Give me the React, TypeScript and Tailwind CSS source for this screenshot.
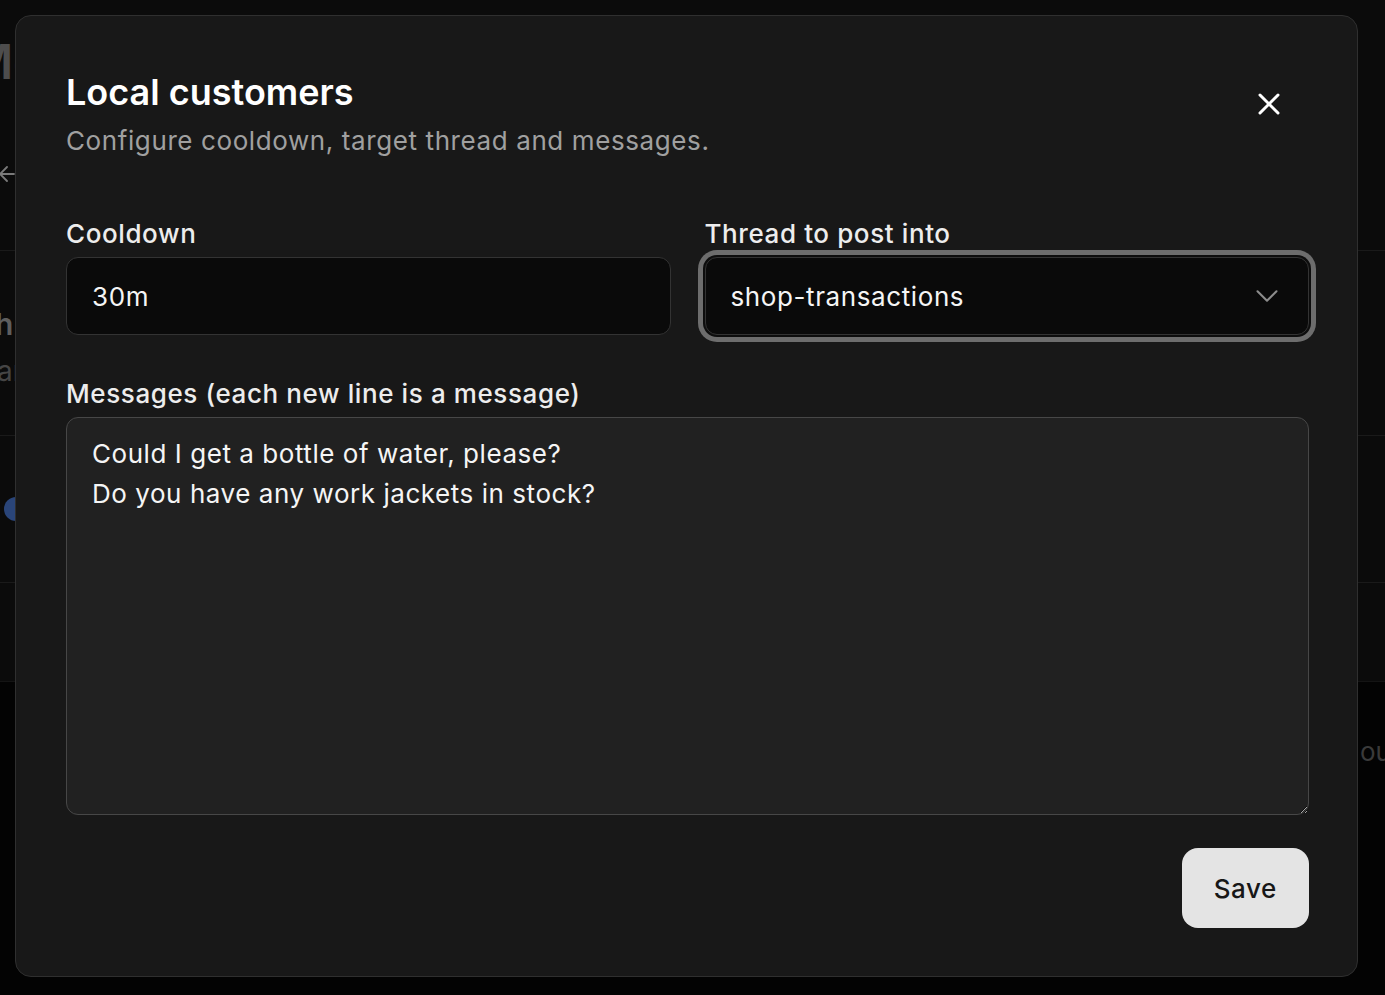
import { ArrowLeft, ChevronDown, X } from 'lucide-react';
import React from 'react';

// Dimmed page that sits behind the dialog; only slivers of it show at the edges.
const BackgroundPage = () => {
  return (
    <div className="flex h-full flex-col">
      <div className="flex h-[251px] flex-col border-b border-[#1a1a1a] bg-[#0b0b0b]">
        <h1 className="ml-[-31px] pt-[34px] text-[48px] font-semibold leading-[56px] text-[#4d4d4d]">
          Mo
        </h1>
        <ArrowLeft className="ml-[-5px] mt-[72px]" size={24} color="#7a7a7a" strokeWidth={1.8} />
      </div>

      <div className="flex h-[185px] flex-col border-b border-[#1a1a1a] bg-[#0b0b0b] pt-[55px]">
        <span className="ml-[-5px] text-[30px] font-semibold leading-[36px] text-[#5e5e5e]">h</span>
        <span className="ml-[-3px] mt-[12px] text-[28px] leading-[34px] text-[#454545]">ar</span>
      </div>

      <div className="flex h-[147px] items-center border-b border-[#1a1a1a] bg-[#0b0b0b]">
        <div className="ml-[4px] h-[24px] w-[24px] rounded-full bg-[#2a4579]" />
      </div>

      <div className="h-[99px] border-b border-[#141414] bg-[#0b0b0b]" />

      <div className="flex flex-1 justify-end bg-[#030303] pt-[52px]">
        <span className="mr-[-6px] text-[26px] leading-[36px] text-[#3a3a3a]">ou</span>
      </div>
    </div>
  );
};

const LocalCustomersDialog = () => {
  return (
    <div className="absolute left-[15px] top-[15px] flex h-[962px] w-[1343px] flex-col rounded-[16px] border border-[#2f2f2f] bg-[#181818] pb-[48px] pl-[50px] pr-[48px] pt-[54px] tracking-[0.6px]">
      <button className="absolute right-[70px] top-[70px] text-white">
        <X size={36} strokeWidth={2} />
      </button>

      {/* Header */}
      <div className="flex flex-col gap-[9px]">
        <h2 className="text-[36px] font-semibold leading-[44px] tracking-normal text-white">
          Local customers
        </h2>
        <p className="text-[26px] leading-[36px] text-[#a0a0a0]">
          Configure cooldown, target thread and messages.
        </p>
      </div>

      <div className="mt-[57px] grid grid-cols-2 gap-x-[34px]">
        <div className="flex flex-col gap-[5px]">
          <label className="text-[26px] font-medium leading-[36px] text-[#ededed]">Cooldown</label>
          <input
            readOnly
            defaultValue="30m"
            className="h-[78px] rounded-[12px] border border-[#333333] bg-[#0a0a0a] px-[25px] text-[26px] tracking-[0.6px] text-[#f5f5f5] outline-none"
          />
        </div>

        <div className="flex flex-col gap-[5px]">
          <label className="text-[26px] font-medium leading-[36px] text-[#ededed]">
            Thread to post into
          </label>
          <div className="flex h-[78px] items-center justify-between rounded-[12px] border border-[#333333] bg-[#0a0a0a] pl-[25px] pr-[22px] shadow-[0_0_0_2px_#0d0d0d,0_0_0_7px_#6d6d6d]">
            <span className="text-[26px] text-[#f5f5f5]">shop-transactions</span>
            <ChevronDown size={38} strokeWidth={1.3} color="#8c8c8c" />
          </div>
        </div>
      </div>

      <div className="mt-[41px] flex flex-col gap-[5px]">
        <label className="text-[26px] font-medium leading-[36px] text-[#ededed]">
          Messages (each new line is a message)
        </label>
        <textarea
          readOnly
          defaultValue={'Could I get a bottle of water, please?\nDo you have any work jackets in stock?'}
          className="h-[398px] rounded-[12px] border border-[#474747] bg-[#212121] px-[25px] py-[16px] text-[26px] leading-[40px] tracking-[0.55px] text-[#f5f5f5] outline-none"
        />
      </div>

      <div className="mt-[33px] flex justify-end">
        <button className="h-[80px] rounded-[16px] bg-[#e4e4e4] px-[32px] text-[26px] font-medium tracking-[0.6px] text-[#171717]">
          Save
        </button>
      </div>
    </div>
  );
};

export default function App() {
  return (
    <div className="relative h-[995px] w-[1385px] overflow-hidden bg-[#0a0a0a] font-['Inter',sans-serif] [color-scheme:dark]">
      <BackgroundPage />
      <LocalCustomersDialog />
    </div>
  );
}
